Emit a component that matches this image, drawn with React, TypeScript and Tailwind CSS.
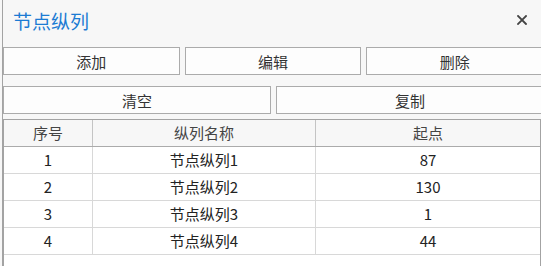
import React from "react";

const rows = [
  { id: 1, name: "节点纵列1", start: 87 },
  { id: 2, name: "节点纵列2", start: 130 },
  { id: 3, name: "节点纵列3", start: 1 },
  { id: 4, name: "节点纵列4", start: 44 },
];

function Btn({ label }: { label: string }) {
  return (
    <button className="h-[28px] bg-[#fdfdfd] border border-[#ababab] text-[15px] leading-none text-[#333] flex items-center justify-center">
      {label}
    </button>
  );
}

export default function App() {
  return (
    <div className="w-[541px] h-[266px] overflow-hidden bg-[#f7f7f7] font-['Noto_Sans_CJK_SC',sans-serif]">
      <div className="ml-[2px] h-full border-l border-[#a3a3a3] flex flex-col">
        {/* Header */}
        <div className="h-[47px] w-[538px] flex items-center justify-between pl-[10px] pr-[14px] pb-[7px]">
          <span className="text-[19px] text-[#1b7bd3] leading-none">节点纵列</span>
          <svg width="10" height="10" viewBox="0 0 10 10" className="text-[#444]">
            <path d="M1 1L9 9M9 1L1 9" stroke="currentColor" strokeWidth={1.8} strokeLinecap="square" />
          </svg>
        </div>

        {/* Buttons */}
        <div className="grid grid-cols-3 gap-[5px] w-[540px] shrink-0">
          <Btn label="添加" />
          <Btn label="编辑" />
          <Btn label="删除" />
        </div>
        <div className="grid grid-cols-2 gap-[5px] w-[541px] mt-[11px] shrink-0">
          <Btn label="清空" />
          <Btn label="复制" />
        </div>

        {/* Table */}
        <div className="mt-[5px] w-[538px] flex-1 border border-b-0 border-[#a3a3a3] bg-white flex flex-col">
          <div className="h-[27px] shrink-0 flex bg-[#f7f7f7] border-b border-[#ababab] text-[15px] text-[#444]">
            <div className="w-[89px] border-r border-[#c4c4c4] flex items-center justify-center">序号</div>
            <div className="w-[223px] border-r border-[#c4c4c4] flex items-center justify-center">纵列名称</div>
            <div className="flex-1 flex items-center justify-center">起点</div>
          </div>
          {rows.map((r) => (
            <div key={r.id} className="h-[27px] shrink-0 flex border-b border-[#d8d8d8] text-[15px] text-[#222]">
              <div className="w-[89px] border-r border-[#d8d8d8] flex items-center justify-center">{r.id}</div>
              <div className="w-[223px] border-r border-[#d8d8d8] flex items-center justify-center">{r.name}</div>
              <div className="flex-1 flex items-center justify-center">{r.start}</div>
            </div>
          ))}
        </div>
      </div>
    </div>
  );
}
